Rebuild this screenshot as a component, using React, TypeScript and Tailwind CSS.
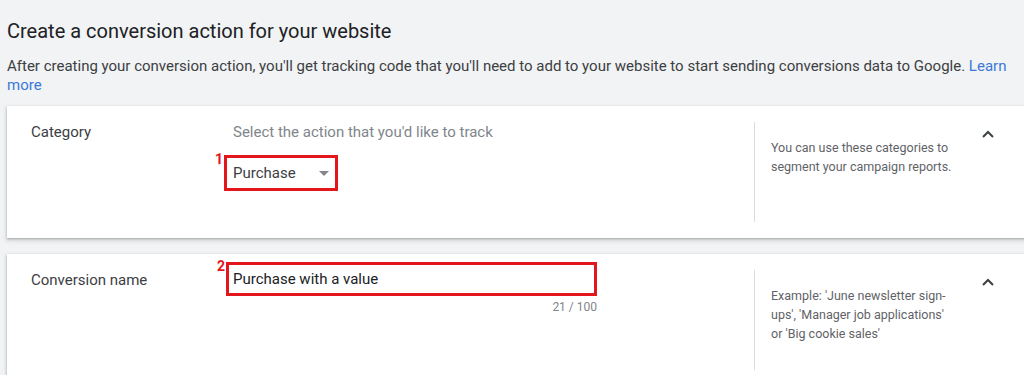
const font = { fontFamily: "Roboto, 'Liberation Sans', sans-serif" };

function Chevron() {
  return (
    <svg width="14" height="10" viewBox="0 0 14 10" className="text-[#3c4043]">
      <path d="M2 8 L7 3 L12 8" fill="none" stroke="currentColor" strokeWidth="2" />
    </svg>
  );
}

function Mark({ n }: { n: string }) {
  return (
    <span
      className="absolute -left-[12px] -top-[6px] text-[14px] font-bold leading-none text-[#e3171b]"
      style={{ textShadow: "1px 1px 0 #fff, -1px 0 0 #fff, 0 1px 1px #bbb" }}
    >
      {n}
    </span>
  );
}

function Card({
  label,
  field,
  help,
}: {
  label: string;
  field: React.ReactNode;
  help: React.ReactNode;
}) {
  return (
    <section className="ml-[7px] w-[1040px] bg-white py-4 shadow-[0_1px_2px_rgba(60,64,67,0.3),0_2px_4px_1px_rgba(60,64,67,0.15)]">
      <div className="flex h-[100px]">
        <div className="w-[217px] pl-6 text-[15px] leading-5 text-[#3c4043]">{label}</div>
        <div className="w-[530px]">{field}</div>
        <div className="w-[222px] border-l border-[#dadce0] pl-4 pt-4 text-[12.5px] leading-[19px] text-[#5f6368]">
          <div className="w-[184px]">{help}</div>
        </div>
        <div className="flex w-6 justify-center pt-[7px]">
          <Chevron />
        </div>
      </div>
    </section>
  );
}

export default function App() {
  return (
    <div className="h-[375px] w-[1024px] overflow-hidden bg-[#f1f3f4]" style={font}>
      <h1 className="px-[7px] pt-[19px] text-[20px] leading-6 text-[#202124]">
        Create a conversion action for your website
      </h1>
      <p className="mt-[14px] px-[7px] text-[15px] leading-[19px] text-[#3c4043]">
        After creating your conversion action, you'll get tracking code that you'll need to add to your website to start
        sending conversions data to Google. <span className="text-[#3b78d8]">Learn more</span>
      </p>

      <div className="mt-[11px] flex flex-col gap-4">
        <Card
          label="Category"
          field={
            <div className="flex flex-col items-start">
              <div className="pl-[9px] text-[15px] leading-5 text-[#80868b]">Select the action that you'd like to track</div>
              <div className="relative mt-[13px] flex h-[36px] w-[114px] items-center justify-between border-[3px] border-[#e3171b] pl-[6px] pr-[6px]">
                <Mark n="1" />
                <span className="text-[15px] text-[#3c4043]">Purchase</span>
                <svg width="10" height="5" viewBox="0 0 10 5">
                  <path d="M0 0 L10 0 L5 5 Z" fill="#80868b" />
                </svg>
              </div>
            </div>
          }
          help={<>You can use these categories to segment your campaign reports.</>}
        />
        <Card
          label="Conversion name"
          field={
            <div className="-mt-[8px] ml-[2px] w-[371px]">
              <div className="relative flex h-[34px] items-center border-[3px] border-[#e3171b] pl-[4px]">
                <Mark n="2" />
                <span className="text-[15px] text-[#202124]">Purchase with a value</span>
              </div>
              <div className="mt-[3px] text-right text-[12px] leading-4 text-[#80868b]">21 / 100</div>
            </div>
          }
          help={<>Example: 'June newsletter sign-ups', 'Manager job applications' or 'Big cookie sales'</>}
        />
      </div>
    </div>
  );
}
